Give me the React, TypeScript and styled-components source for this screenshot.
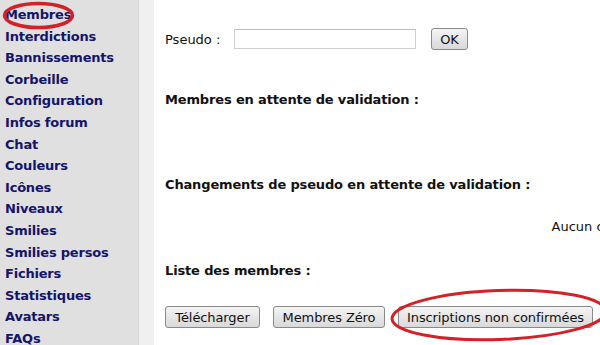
import styled, { createGlobalStyle } from 'styled-components';

const GlobalStyle = createGlobalStyle`
  html, body {
    margin: 0;
    padding: 0;
    background: #ffffff;
  }
  body {
    font-family: 'DejaVu Sans', Verdana, sans-serif;
    overflow: hidden;
  }
`;

// #region Styles

const Page = styled.div`
  display: flex;
  width: 600px;
  height: 345px;
  overflow: hidden;
  position: relative;
`;

const Sidebar = styled.nav`
  width: 139px;
  flex-shrink: 0;
  background-color: #e0e0e0;
  border-right: 1px solid #d6d6d6;
  padding: 4px 0 0 5px;
  box-sizing: border-box;
  display: flex;
  flex-direction: column;
`;

const NavLink = styled.a`
  font-size: 13px;
  font-weight: bold;
  line-height: 21.6px;
  color: #14146b;
  text-decoration: none;
  white-space: nowrap;
  letter-spacing: -0.2px;
`;

const Gutter = styled.div`
  width: 15px;
  flex-shrink: 0;
  background-color: #f0f0f0;
`;

const Main = styled.main`
  flex-shrink: 0;
  width: 1040px;
  padding: 28px 0 0 11px;
  display: flex;
  flex-direction: column;
  color: #111;
  font-size: 13px;
`;

const SearchRow = styled.form`
  display: flex;
  align-items: center;
  height: 22px;
`;

const Label = styled.label`
  width: 69px;
`;

const TextInput = styled.input`
  width: 182px;
  height: 20px;
  box-sizing: border-box;
  border: 1px solid #cfcfcf;
  border-top-color: #bdbdbd;
  margin-right: 15px;
  padding: 0 4px;
`;

const Button = styled.button<{ $width: number }>`
  width: ${({ $width }) => $width}px;
  height: 22px;
  padding: 0;
  font-family: 'DejaVu Sans', Verdana, sans-serif;
  font-size: 13px;
  color: #111;
  background: linear-gradient(#f4f4f4, #e6e6e6 50%, #d9d9d9);
  border: 1px solid #8a8a8a;
  border-radius: 3px;
  white-space: nowrap;
  letter-spacing: -0.1px;
`;

const Heading = styled.div<{ $top: number }>`
  margin-top: ${({ $top }) => $top}px;
  font-weight: bold;
  line-height: 18px;
  letter-spacing: -0.15px;
`;

const Empty = styled.div`
  margin-top: 24px;
  line-height: 18px;
  text-align: center;
  padding-left: 8px;
`;

const ButtonRow = styled.div`
  margin-top: 26px;
  display: flex;
  gap: 13px;
`;

const Circle = styled.svg`
  position: absolute;
  pointer-events: none;
  overflow: visible;
`;

// #endregion

const links = [
  'Membres',
  'Interdictions',
  'Bannissements',
  'Corbeille',
  'Configuration',
  'Infos forum',
  'Chat',
  'Couleurs',
  'Icônes',
  'Niveaux',
  'Smilies',
  'Smilies persos',
  'Fichiers',
  'Statistiques',
  'Avatars',
  'FAQs',
];

const App = () => {
  return (
    <>
      <GlobalStyle />
      <Page>
        <Sidebar>
          {links.map((l) => (
            <NavLink key={l} href="#">
              {l}
            </NavLink>
          ))}
        </Sidebar>
        <Gutter />
        <Main>
          <SearchRow onSubmit={(e) => e.preventDefault()}>
            <Label htmlFor="pseudo">Pseudo :</Label>
            <TextInput id="pseudo" type="text" />
            <Button $width={37}>OK</Button>
          </SearchRow>
          <Heading $top={41}>Membres en attente de validation :</Heading>
          <Heading $top={67}>Changements de pseudo en attente de validation :</Heading>
          <Empty>Aucun changement de pseudo en attente.</Empty>
          <Heading $top={26}>Liste des membres :</Heading>
          <ButtonRow>
            <Button $width={95}>Télécharger</Button>
            <Button $width={112}>Membres Zéro</Button>
            <Button $width={195}>Inscriptions non confirmées</Button>
          </ButtonRow>
        </Main>
        <Circle style={{ left: 3, top: 2 }} width="72" height="27">
          <ellipse cx="35.5" cy="13.5" rx="34" ry="12" fill="none" stroke="#d42027" strokeWidth="3.5" />
        </Circle>
        <Circle style={{ left: 389, top: 289 }} width="220" height="54">
          <ellipse
            cx="110"
            cy="26"
            rx="107"
            ry="24.5"
            fill="none"
            stroke="#d42027"
            strokeWidth="3"
            transform="rotate(-2 110 26)"
          />
        </Circle>
      </Page>
    </>
  );
};

export default App;
